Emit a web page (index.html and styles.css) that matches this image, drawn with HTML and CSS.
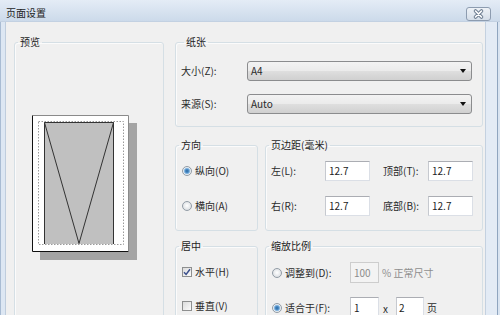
FILE: index.html
```html
<!DOCTYPE html>
<html lang="zh-CN">
<head>
<meta charset="utf-8">
<title>页面设置</title>
<link rel="stylesheet" href="styles.css">
</head>
<body>
<div class="win">
  <div class="titlebar">
    <span class="title">页面设置</span>
    <div class="close">
      <svg width="23" height="12" viewBox="0 0 23 12">
        <path d="M8.5 3 L14.5 9 M14.5 3 L8.5 9" stroke="#6f7f93" stroke-width="3.6" stroke-linecap="round" fill="none"/>
        <path d="M8.5 3 L14.5 9 M14.5 3 L8.5 9" stroke="#ffffff" stroke-width="1.6" stroke-linecap="round" fill="none"/>
      </svg>
    </div>
  </div>
  <div class="main">
    <div class="frame-l"></div>
    <div class="content">
      <fieldset class="grp preview">
        <legend>预览</legend>
        <svg class="page" width="110" height="150" viewBox="0 0 110 150">
          <rect x="10" y="11" width="97" height="137" fill="#a4a4a4"/>
          <rect x="2" y="3" width="97" height="137" fill="#ffffff"/>
          <path d="M2.5 3.5 H98.5 V139.5" stroke="#8a8a8a" fill="none"/>
          <path d="M2.5 3.5 V139.5 H98.5" stroke="#111" fill="none"/>
          <rect x="14" y="10" width="70" height="122" fill="#c0c0c0"/>
          <rect x="8.5" y="9.5" width="85" height="123" fill="none" stroke="#9a9a9a" stroke-dasharray="1.5 1.5"/>
          <path d="M14.5 132 V10.5 H83.5 V132" stroke="#333" fill="none"/>
          <path d="M14.5 10.5 L49 131.5 L83.5 10.5" stroke="#333" fill="none"/>
        </svg>
      </fieldset>
      <div class="right">
        <fieldset class="grp paper">
          <legend>纸张</legend>
          <div class="prow">
            <span class="plabel">大小(Z):</span>
            <div class="combo"><span>A4</span><i class="arrow"></i></div>
          </div>
          <div class="prow">
            <span class="plabel">来源(S):</span>
            <div class="combo"><span>Auto</span><i class="arrow"></i></div>
          </div>
        </fieldset>
        <div class="pair pair1">
          <fieldset class="grp small">
            <legend>方向</legend>
            <div class="rows">
              <div class="row opt"><span class="radio on"></span><span>纵向(O)</span></div>
              <div class="row opt"><span class="radio"></span><span>横向(A)</span></div>
            </div>
          </fieldset>
          <fieldset class="grp wide">
            <legend>页边距(毫米)</legend>
            <div class="rows">
              <div class="row mrow">
                <span class="ml1">左(L):</span><div class="box">12.7</div>
                <span class="ml2">顶部(T):</span><div class="box">12.7</div>
              </div>
              <div class="row mrow">
                <span class="ml1">右(R):</span><div class="box">12.7</div>
                <span class="ml2">底部(B):</span><div class="box">12.7</div>
              </div>
            </div>
          </fieldset>
        </div>
        <div class="pair pair2">
          <fieldset class="grp small">
            <legend>居中</legend>
            <div class="rows rows2">
              <div class="row opt"><span class="check on"><svg width="8" height="8" viewBox="0 0 8 8"><path d="M1 4.2 L3.1 6.4 L7 1.2" stroke="#3b4f8c" stroke-width="1.5" fill="none"/></svg></span><span>水平(H)</span></div>
              <div class="row opt"><span class="check"></span><span>垂直(V)</span></div>
            </div>
          </fieldset>
          <fieldset class="grp wide">
            <legend>缩放比例</legend>
            <div class="rows rows2">
              <div class="row srow">
                <span class="radio"></span><span class="sl">调整到(D):</span>
                <div class="box num dis">100</div><span class="gray">% 正常尺寸</span>
              </div>
              <div class="row srow">
                <span class="radio on"></span><span class="sl">适合于(F):</span>
                <div class="box num">1</div><span class="times">x</span><div class="box num n2">2</div><span class="pg">页</span>
              </div>
            </div>
          </fieldset>
        </div>
      </div>
    </div>
    <div class="frame-r"></div>
  </div>
</div>
</body>
</html>
```
FILE: styles.css
```css
* { box-sizing: border-box; }
html, body { margin: 0; padding: 0; }
body {
  width: 500px;
  height: 315px;
  overflow: hidden;
  font-family: "Noto Sans CJK SC", "Liberation Sans", sans-serif;
  font-size: 10px;
  line-height: 14px;
  color: #2a2a2a;
  background: #f0f0f0;
}
.win { display: flex; flex-direction: column; height: 315px; overflow: hidden; }
.titlebar {
  height: 22px;
  flex: none;
  display: flex;
  align-items: flex-start;
  justify-content: space-between;
  padding: 0 9px 0 6px;
  background: linear-gradient(#e4ecf6, #ccdaea);
  border-bottom: 1px solid #c3d1e2;
}
.title { margin-top: 6px; color: #1e1e1e; }
.close {
  margin-top: 7px;
  width: 25px;
  height: 14px;
  border: 1px solid #8d9cb0;
  border-radius: 3px;
  background: linear-gradient(#eef2f7, #d5dee9);
  display: flex;
  align-items: center;
  justify-content: center;
}
.close svg { display: block; }
.main { flex: 1; display: flex; min-height: 0; overflow: hidden; }
.frame-l {
  width: 6px;
  flex: none;
  background: linear-gradient(to right, #a9bcd3 0 1px, #dde7f3 1px 5px, #bfcddd 5px 6px);
}
.frame-r {
  width: 15px;
  flex: none;
  background: linear-gradient(to right, #c4d1e0 0 1px, #e3ebf5 1px 12px, #8fa5bf 12px 13px, #d9e4f1 13px);
}
.content {
  flex: 1;
  display: flex;
  gap: 11px;
  padding: 13px 2px 0 8px;
  background: #f0f0f0;
  overflow: hidden;
}
.grp {
  margin: 0;
  padding: 0;
  min-width: 0;
  border: 1px solid #d5dfe5;
  border-radius: 3px;
  box-shadow: inset 1px 1px 0 #fbfbfb;
}
.grp legend {
  margin-left: 3px;
  padding: 0 2px;
  line-height: 14px;
  color: #1e1e1e;
}
.preview { width: 150px; height: 320px; flex: none; }
.page { display: block; margin: 63px 0 0 15px; }
.right { width: 308px; flex: none; display: flex; flex-direction: column; }
.paper { padding: 12px 10px 12px 5px; }
.prow { display: flex; align-items: center; height: 20px; }
.prow + .prow { margin-top: 13px; }
.plabel { width: 66px; flex: none; }
.combo {
  flex: 1;
  height: 20px;
  border: 1px solid #8b8c8e;
  border-radius: 3px;
  background: linear-gradient(#f3f3f3 0%, #ebebeb 48%, #dedede 52%, #d0d0d0 100%);
  display: flex;
  align-items: center;
  justify-content: space-between;
  padding: 0 5px 0 3px;
}
.arrow {
  width: 0;
  height: 0;
  border-left: 3px solid transparent;
  border-right: 3px solid transparent;
  border-top: 4px solid #111;
}
.pair { display: flex; gap: 7px; }
.pair1 { margin-top: 11px; }
.pair2 { margin-top: 8px; height: 120px; flex: none; }
.small { width: 83px; flex: none; }
.wide { flex: 1; }
.rows { padding: 9px 0 14px 0; display: flex; flex-direction: column; gap: 15px; }
.rows2 { gap: 14px; }
.row { display: flex; align-items: center; height: 20px; }
.opt { padding-left: 6px; }
.radio {
  width: 10px;
  height: 10px;
  flex: none;
  border-radius: 50%;
  border: 1px solid #929ca6;
  background: radial-gradient(circle at 50% 45%, #ffffff 0, #eceef0 40%, #d3d7db 100%);
  margin-right: 3px;
}
.radio.on {
  background: radial-gradient(circle at 50% 50%, #2a67a0 0, #4f8fc8 1.8px, #a6cbeb 3px, #eef1f4 3.6px, #d3d7db 100%);
}
.check {
  width: 10px;
  height: 10px;
  flex: none;
  border: 1px solid #8e8f8f;
  background: linear-gradient(135deg, #dcdcdc, #fbfbfb);
  margin-right: 3px;
  display: flex;
  align-items: center;
  justify-content: center;
}
.check svg { display: block; }
.mrow { padding-left: 5px; }
.ml1 { width: 54px; flex: none; }
.ml2 { width: 58px; flex: none; padding-left: 13px; }
.box {
  width: 45px;
  height: 20px;
  flex: none;
  background: #fff;
  border: 1px solid #dbdfe6;
  border-top-color: #abadb3;
  border-left-color: #c6c9cf;
  padding-left: 3px;
  display: flex;
  align-items: center;
  color: #222;
}
.srow { padding-left: 6px; height: 21px; }
.srow .box { height: 21px; }
.sl { width: 65px; flex: none; }
.num { width: 29px; }
.n2 { width: 28px; margin-left: 8px; padding-left: 2px; }
.dis { background: #f3f3f3; border-color: #cdcdcd; color: #8c8c8c; }
.gray { color: #8e8e8e; margin-left: 3px; }
.times { margin-left: 4px; margin-top: 3px; }
.pg { margin-left: 3px; }
```
